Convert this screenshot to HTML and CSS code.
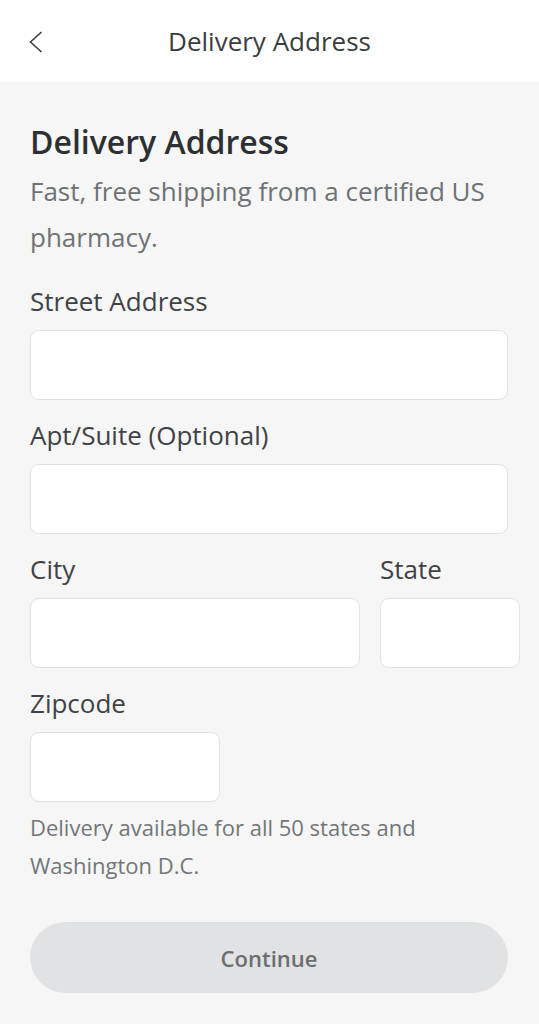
FILE: index.html
```html
<!DOCTYPE html>
<html lang="en">
<head>
<meta charset="utf-8">
<title>Delivery Address</title>
<link rel="stylesheet" href="styles.css">
</head>
<body>
<header class="topbar">
  <button class="back" aria-label="Back">
    <svg width="14" height="22" viewBox="0 0 14 22"><path d="M12.5 1 L1.5 11 L12.5 21" fill="none" stroke="#3c3f42" stroke-width="1.6"/></svg>
  </button>
  <div class="topbar-title">Delivery Address</div>
</header>
<main class="content">
  <h1 class="title">Delivery Address</h1>
  <p class="subtitle">Fast, free shipping from a certified US pharmacy.</p>
  <div class="field">
    <label class="label">Street Address</label>
    <div class="input"></div>
  </div>
  <div class="field">
    <label class="label">Apt/Suite (Optional)</label>
    <div class="input"></div>
  </div>
  <div class="row">
    <div class="field">
      <label class="label">City</label>
      <div class="input"></div>
    </div>
    <div class="field">
      <label class="label">State</label>
      <div class="input"></div>
    </div>
  </div>
  <div class="field zip">
    <label class="label">Zipcode</label>
    <div class="input"></div>
  </div>
  <p class="note">Delivery available for all 50 states and Washington D.C.</p>
  <button class="continue">Continue</button>
</main>
</body>
</html>
```

FILE: styles.css
```css
* { box-sizing: border-box; }
html, body { margin: 0; padding: 0; }
body {
  font-family: "Open Sans", "Liberation Sans", sans-serif;
  background: #f6f6f6;
  width: 539px;
  min-height: 1024px;
}
.topbar {
  position: relative;
  height: 82px;
  background: #ffffff;
  display: flex;
  align-items: center;
  justify-content: center;
}
.back {
  position: absolute;
  left: 29px;
  top: 31px;
  border: 0;
  background: none;
  padding: 0;
  width: 14px;
  height: 22px;
}
.back svg { display: block; }
.topbar-title {
  font-size: 26px;
  color: #3a3d40;
}
.content {
  display: flex;
  flex-direction: column;
  padding: 38px 31px 0 30px;
}
.title {
  margin: 0;
  font-size: 32px;
  font-weight: 600;
  color: #2d3033;
  line-height: 44px;
}
.subtitle {
  margin: 4px 0 6px;
  font-size: 26px;
  line-height: 46px;
  color: #6f7275;
}
.field { margin-top: 18px; }
.label {
  display: block;
  font-size: 26px;
  line-height: 34px;
  color: #3f4245;
  margin-bottom: 12px;
}
.input {
  height: 70px;
  background: #ffffff;
  border: 1px solid #e2e2e2;
  border-radius: 9px;
}
.row {
  display: grid;
  grid-template-columns: 330px 140px;
  column-gap: 20px;
}
.zip .input { width: 190px; }
.note {
  margin: 6px 0 0;
  font-size: 22px;
  line-height: 38px;
  color: #737679;
}
.continue {
  margin-top: 38px;
  display: block;
  width: 100%;
  height: 71px;
  border: 0;
  border-radius: 36px;
  background: #e1e2e3;
  color: #6b6e71;
  font-family: inherit;
  font-size: 22px;
  font-weight: 600;
}
```
